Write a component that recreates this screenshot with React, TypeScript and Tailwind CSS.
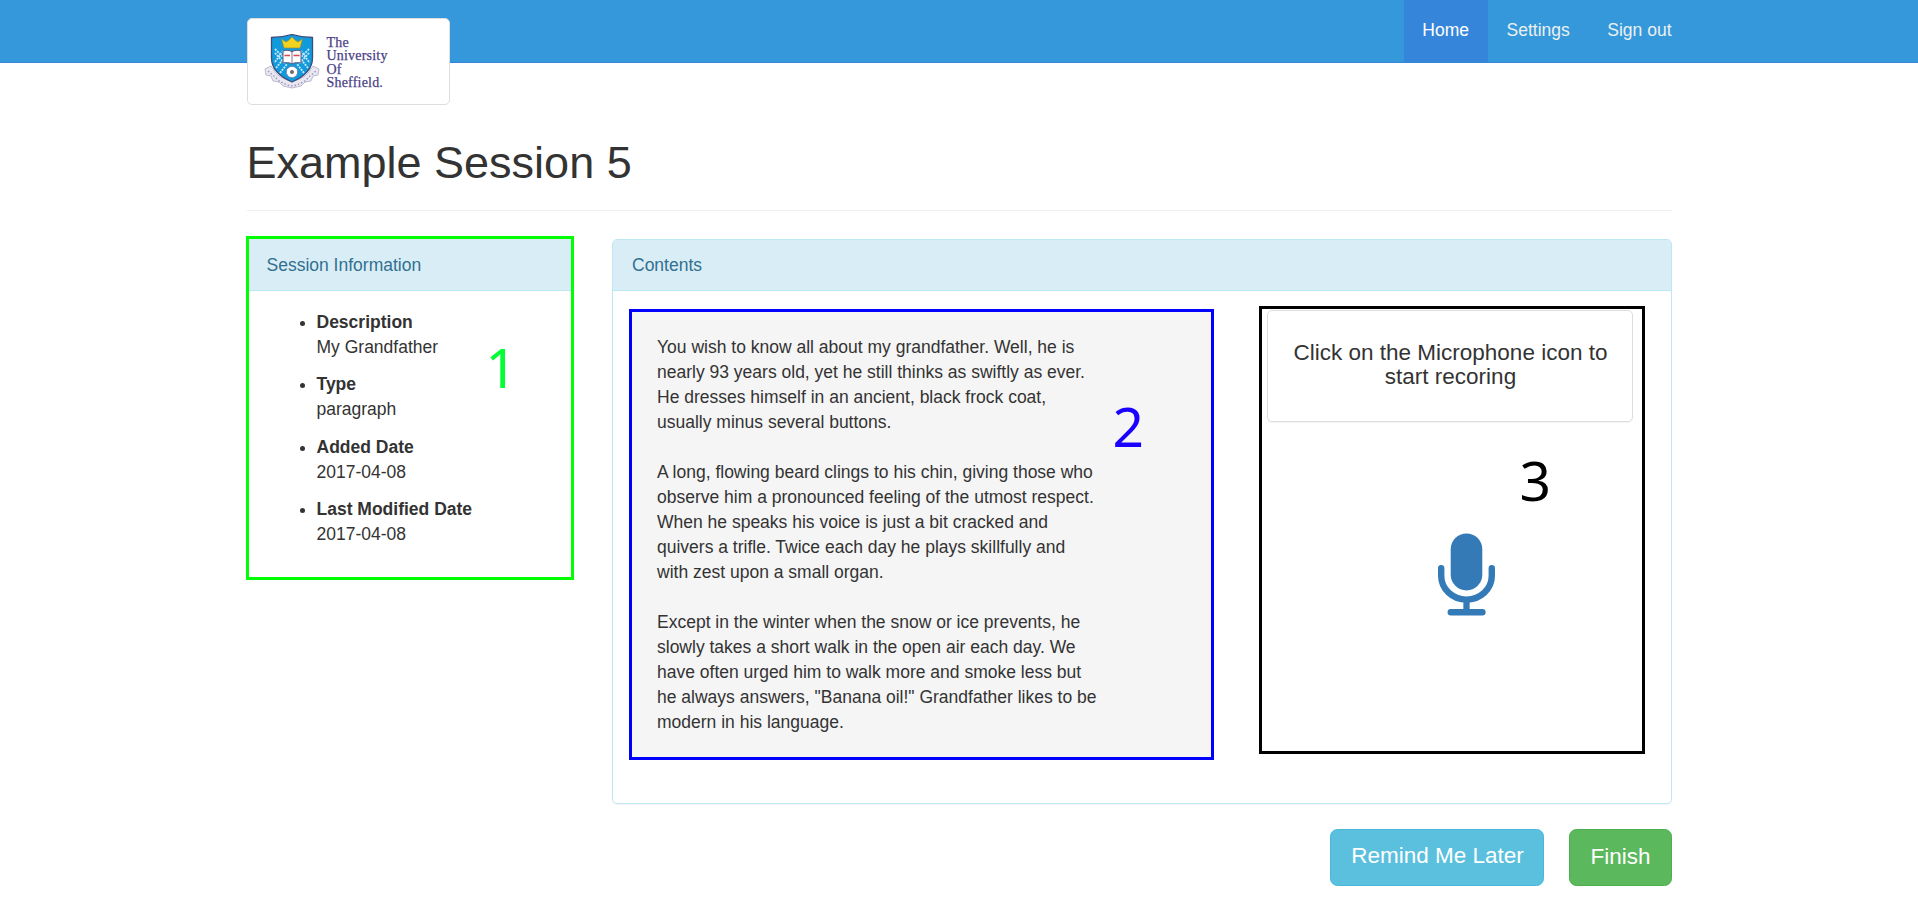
function Crest() {
  return (
    <svg className="block h-14 w-14" viewBox="0 0 56 56" fill="none">
      <path d="M1 35l6-3 3 4c2 5 8 9 18 11 10-2 16-6 18-11l3-4 6 3-1 6-5 1-2 5-6 1-4 4-9 2-9-2-4-4-6-1-2-5-5-1z" fill="#e9e7f0" stroke="#bdbad2" strokeWidth="1" />
      <path d="M4 37l6 5 5 5 8 4 5 1 5-1 8-4 5-5 6-5" stroke="#9d99bd" strokeWidth="1.500" strokeDasharray="1.5 2" />
      <path d="M7.500 3.500c7 0 14-1 20.500-3 6.500 2 13.500 3 20.500 3V24c0 10-7 18-20.500 24C14.500 42 7.500 34 7.500 24z" fill="#119bdc" stroke="#3d4c7c" strokeWidth="1.300" />
      <path d="M11 15l9 9M11 19l10 11M11 28l8-11M12 34l8-10M16 39l7-9M45 15l-9 9M45 19L35 30M45 28l-8-11M44 34l-8-10M40 39l-7-9" stroke="#c5e6f7" strokeWidth="1.800" strokeDasharray="2 1" />
      <path d="M17.500 5l4.500 3 3-2 3-3 3 3 3 2 4.500-3-2.500 9H20z" fill="#f0d321" stroke="#998a32" strokeWidth=".7" />
      <path d="M19 17c3.500-1 6.500-1 9 .8 2.500-1.800 5.500-1.800 9-.8v12c-3-.6-6.500-.5-9 .8-2.500-1.300-6-1.400-9-.8z" fill="#fff" stroke="#55557e" strokeWidth="1" />
      <path d="M28 18v11" stroke="#55557e" strokeWidth=".8" />
      <path d="M20.500 21.500h5.500M29.500 21.500h6" stroke="#d64550" strokeWidth="1.500" />
      <circle cx="28" cy="38" r="5.600" fill="#fff" stroke="#77759b" strokeWidth=".8" strokeDasharray="3 1" />
      <circle cx="28" cy="38" r="2" fill="#6c6d66" />
    </svg>
  );
}

function Microphone() {
  return (
    <svg className="block h-[83px] w-[57px]" viewBox="0 0 57 83" fill="none">
      <rect x="12.700" y="0.400" width="31.600" height="57" rx="15.800" fill="#337ab7" />
      <path d="M3.200 35.300v7.500a25.300 23.800 0 0 0 50.600 0V35.300" stroke="#337ab7" strokeWidth="6.400" strokeLinecap="round" />
      <path d="M28.500 67v11" stroke="#337ab7" strokeWidth="6.300" />
      <path d="M12.800 79.200h31.600" stroke="#337ab7" strokeWidth="6.400" strokeLinecap="round" />
    </svg>
  );
}

const details = [
  ["Description", "My Grandfather"],
  ["Type", "paragraph"],
  ["Added Date", "2017-04-08"],
  ["Last Modified Date", "2017-04-08"],
];

const passage = [
  [
    "You wish to know all about my grandfather. Well, he is",
    "nearly 93 years old, yet he still thinks as swiftly as ever.",
    "He dresses himself in an ancient, black frock coat,",
    "usually minus several buttons.",
  ],
  [
    "A long, flowing beard clings to his chin, giving those who",
    "observe him a pronounced feeling of the utmost respect.",
    "When he speaks his voice is just a bit cracked and",
    "quivers a trifle. Twice each day he plays skillfully and",
    "with zest upon a small organ.",
  ],
  [
    "Except in the winter when the snow or ice prevents, he",
    "slowly takes a short walk in the open air each day. We",
    "have often urged him to walk more and smoke less but",
    "he always answers, \"Banana oil!\" Grandfather likes to be",
    "modern in his language.",
  ],
];

export default function App() {
  return (
    <div className="h-[916px] overflow-hidden bg-white font-['Liberation_Sans',Arial,sans-serif] text-[17.5px] leading-[25px] text-[#333]">
      <header className="h-[63px] border-b border-[#3586db] bg-[#3498db]">
        <div className="mx-auto flex w-[1425px] items-start justify-between">
          <a className="mt-[18px] flex h-[87px] w-[203px] items-start rounded-[5px] border border-[#ddd] bg-white pt-[15px] pl-4">
            <Crest />
            <span className="mt-[2px] ml-[7px] font-['Liberation_Serif',serif] text-[14px] leading-[13.3px] tracking-[0.2px] text-[#4a3f86] [-webkit-text-stroke:0.25px_#4a3f86]">
              The<br />University<br />Of<br />Sheffield.
            </span>
          </a>
          <nav className="flex h-[62px] text-[#ecf0f1]">
            <a className="bg-[#3586db] px-[18.75px] pt-[18px] text-white">Home</a>
            <a className="px-[18.75px] pt-[18px]">Settings</a>
            <a className="pt-[18px] pl-[18.75px]">Sign out</a>
          </nav>
        </div>
      </header>

      <main className="mx-auto w-[1425px]">
        <div className="h-[148px] border-b border-[#eee] pt-[75px]">
          <h1 className="text-[45px] leading-[49.5px]">Example Session 5</h1>
        </div>

        <div className="flex items-start justify-between">
          <section className="relative mt-[25px] -ml-px h-[344px] w-[328px] border-3 border-[#00ff00]">
            <h2 className="h-[52px] border-b border-[#bce8f1] bg-[#d9edf7] pt-[13.5px] pl-[18px] text-[#31708f]">Session Information</h2>
            <ul className="flex list-disc flex-col gap-[12.5px] pt-[18.75px] pl-[68px]">
              {details.map(([name, value]) => (
                <li key={name}>
                  <strong className="block">{name}</strong>
                  {value}
                </li>
              ))}
            </ul>
            <span className="absolute top-[90px] left-[237px] font-['Noto_Sans',sans-serif] text-[55px] leading-[76px] text-[#00ff33]">1</span>
          </section>

          <section className="mt-7 h-[565px] w-[1060px] rounded-[5px] border border-[#bce8f1] shadow-[0_1px_1px_rgba(0,0,0,0.05)]">
            <h2 className="h-[51px] rounded-t-[4px] border-b border-[#bce8f1] bg-[#d9edf7] pt-[12.5px] pl-[19.5px] text-[#31708f]">Contents</h2>
            <div className="flex items-start pl-4">
              <div className="relative mt-[18px] h-[451px] w-[585px] border-3 border-[#0000ff] bg-[#f5f5f5] pt-[22.5px] pl-[25.5px]">
                <div className="flex flex-col gap-[25px]">
                  {passage.map((lines) => (
                    <p key={lines[0]}>
                      {lines.map((line) => (
                        <span key={line} className="block whitespace-nowrap">{line}</span>
                      ))}
                    </p>
                  ))}
                </div>
                <span className="absolute top-[76px] left-[481px] font-['Noto_Sans',sans-serif] text-[55px] leading-[76px] text-[#1a00ff]">2</span>
              </div>

              <div className="relative mt-[15px] ml-[45px] h-[448px] w-[386px] border-3 border-black pt-px pl-[5px]">
                <div className="h-[112px] w-[366px] rounded-[5px] border border-[#ddd] pt-[29.6px] pl-[2px] text-center text-[22.5px] leading-[24.75px] shadow-[0_1px_1px_rgba(0,0,0,0.05)]">
                  Click on the Microphone icon to<br />start recoring
                </div>
                <div className="mt-[111px] ml-[171.5px]">
                  <Microphone />
                </div>
                <span className="absolute top-[133px] left-[258px] font-['Noto_Sans',sans-serif] text-[55px] leading-[76px] text-black">3</span>
              </div>
            </div>
          </section>
        </div>

        <div className="mt-[25px] flex justify-end gap-[25px] text-[22.5px] leading-[30px] text-white">
          <button className="h-[57px] w-[214px] rounded-[7.5px] border border-[#46b8da] bg-[#5bc0de] pb-[3px] pl-[2px]">Remind Me Later</button>
          <button className="h-[57px] w-[103px] rounded-[7.5px] border border-[#4cae4c] bg-[#5cb85c] pb-px pl-px">Finish</button>
        </div>
      </main>
    </div>
  );
}
